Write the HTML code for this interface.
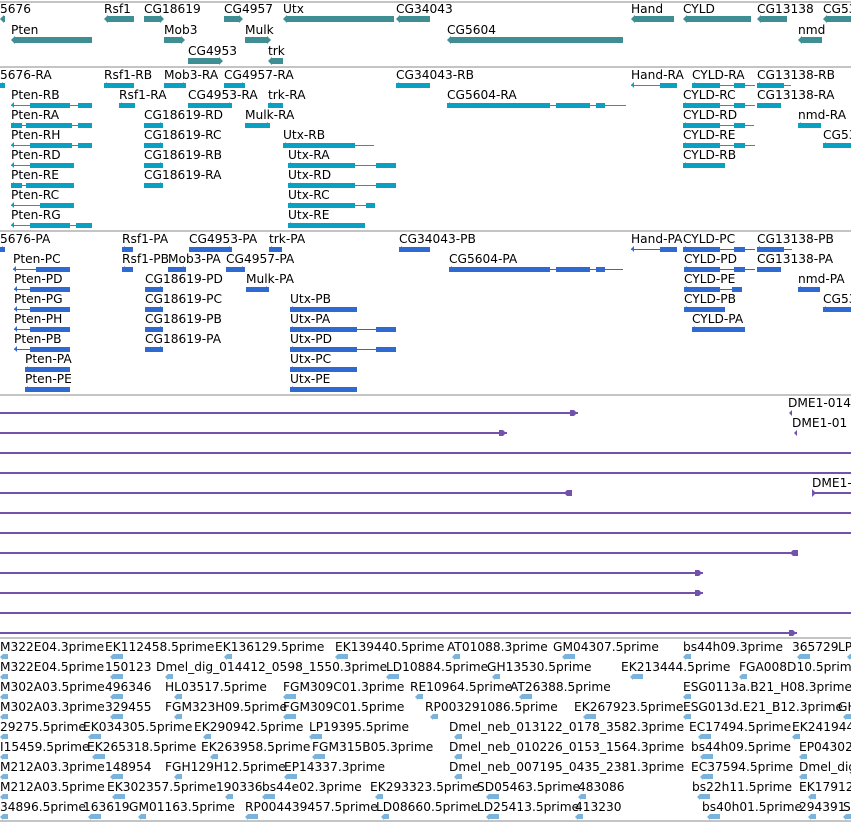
<!DOCTYPE html>
<html><head><meta charset="utf-8">
<style>
html,body{margin:0;padding:0;background:#fff;}
#c{position:relative;width:851px;height:822px;overflow:hidden;background:#fff;font-family:"DejaVu Sans","Liberation Sans",sans-serif;font-size:12.2px;color:#000;}
.t{position:absolute;white-space:nowrap;line-height:14px;height:14px;}
.b{position:absolute;}
.h{position:absolute;left:0;width:851px;height:2px;background:#c4c4c4;}
</style></head><body><div id="c"></div>
<script>
var C=document.getElementById('c'),H='';
function T(x,cy,s){H+='<div class="t" style="left:'+x+'px;top:'+(cy-7)+'px">'+s+'</div>';}
function R(x,y,w,h,c){H+='<div class="b" style="left:'+x+'px;top:'+y+'px;width:'+w+'px;height:'+h+'px;background:'+c+'"></div>';}
function tri(x,cy,h,c,dir){var s=h/2+1;if(dir<0)H+='<div class="b" style="left:'+(x-s)+'px;top:'+(cy-s)+'px;width:0;height:0;border-top:'+s+'px solid transparent;border-bottom:'+s+'px solid transparent;border-right:'+s+'px solid '+c+'"></div>';else H+='<div class="b" style="left:'+x+'px;top:'+(cy-s)+'px;width:0;height:0;border-top:'+s+'px solid transparent;border-bottom:'+s+'px solid transparent;border-left:'+s+'px solid '+c+'"></div>';}
function G(row,x,s,x1,x2,d){var lc=[8.5,30,51][row],bc=[18.5,40,61][row],c='#3f8e93';T(x,lc,s);var h=6;if(d<0){R(x1+4,bc-3,x2-x1-4,h,c);tri(x1+4,bc,h,c,-1);}else{R(x1,bc-3,x2-x1-4,h,c);tri(x2-4,bc,h,c,1);}}
function X(lc,x,s,x1,x2,c,blocks,d){T(x,lc,s);var bc=lc+10;R(x1,bc-0.5,x2-x1,1,c);
 if(!blocks)blocks=[[x1,x2]];blocks.forEach(function(b){R(b[0],bc-2.5,b[1]-b[0],5,c);});
 if(d<0)tri(x1+3,bc,5,c,-1);else if(d>0)tri(x2-3,bc,5,c,1);}
[1,66,230,394,637,820].forEach(function(y){H+='<div class="h" style="top:'+y+'px"></div>';});
G(0,0,'5676',0,5,-1);G(0,104,'Rsf1',104,134,-1);G(0,144,'CG18619',144,164,1);G(0,224,'CG4957',224,243,1);G(0,283,'Utx',283,394,-1);G(0,396,'CG34043',396,430,-1);G(0,631,'Hand',631,674,-1);G(0,683,'CYLD',683,751,-1);G(0,757,'CG13138',757,787,-1);G(0,823,'CG53',823,851,-1);
G(1,11,'Pten',11,92,-1);G(1,164,'Mob3',164,185,1);G(1,245,'Mulk',245,271,1);G(1,447,'CG5604',447,623,-1);G(1,798,'nmd',798,822,-1);
G(2,188,'CG4953',188,223,1);G(2,268,'trk',268,283,-1);
var c2='#0aa0c2',c3='#2f6ad2';
function sec(base,c,rows){rows.forEach(function(r,i){r.forEach(function(f){X(base+20*i,f[0],f[1],f[2],f[3],c,f[4],f[5]);});});}
sec(75,c2,[
 [[0,'5676-RA',0,5,0,-1],[104,'Rsf1-RB',104,134,0,-1],[164,'Mob3-RA',164,186,0,1],[224,'CG4957-RA',224,245,0,1],[396,'CG34043-RB',396,430,[[396,430]],-1],[631,'Hand-RA',631,677,[[660,677]],-1],[692,'CYLD-RA',692,755,[[692,720],[734,745]],-1],[757,'CG13138-RB',757,791,[[757,784]],-1]],
 [[11,'Pten-RB',11,92,[[30,70],[78,92]],-1],[119,'Rsf1-RA',119,135,0,-1],[188,'CG4953-RA',188,232,0,1],[268,'trk-RA',268,283,0,-1],[447,'CG5604-RA',447,626,[[447,550],[556,590],[596,605]],-1],[683,'CYLD-RC',683,755,[[683,720],[734,745]],-1],[757,'CG13138-RA',757,781,0,0]],
 [[11,'Pten-RA',11,92,[[11,22],[26,72],[78,92]],-1],[144,'CG18619-RD',144,163,0,1],[245,'Mulk-RA',245,270,0,1],[683,'CYLD-RD',683,754,[[683,720],[734,745]],-1],[798,'nmd-RA',798,821,0,-1]],
 [[11,'Pten-RH',11,92,[[30,72],[78,92]],-1],[144,'CG18619-RC',144,163,0,1],[283,'Utx-RB',283,374,[[283,355]],-1],[683,'CYLD-RE',683,755,[[683,720],[734,745]],-1],[823,'CG53',823,851,0,-1]],
 [[11,'Pten-RD',11,74,[[30,74]],-1],[144,'CG18619-RB',144,163,0,1],[288,'Utx-RA',288,396,[[288,355],[376,396]],-1],[683,'CYLD-RB',683,725,0,-1]],
 [[11,'Pten-RE',11,74,[[11,22],[26,74]],-1],[144,'CG18619-RA',144,163,0,1],[288,'Utx-RD',288,396,[[288,355],[376,396]],-1]],
 [[11,'Pten-RC',11,74,[[40,74]],-1],[288,'Utx-RC',288,375,[[288,355],[366,375]],-1]],
 [[11,'Pten-RG',11,92,[[30,70],[76,92]],-1],[288,'Utx-RE',288,365,0,-1]]
]);
sec(239,c3,[
 [[0,'5676-PA',0,5,0,-1],[122,'Rsf1-PA',122,133,0,-1],[189,'CG4953-PA',189,232,0,1],[269,'trk-PA',269,282,0,-1],[399,'CG34043-PB',399,430,0,-1],[631,'Hand-PA',631,677,[[660,677]],-1],[683,'CYLD-PC',683,755,[[683,720],[734,745]],-1],[757,'CG13138-PB',757,792,[[757,784]],-1]],
 [[13,'Pten-PC',13,70,[[36,70]],-1],[122,'Rsf1-PB',122,133,0,-1],[168,'Mob3-PA',168,186,0,1],[226,'CG4957-PA',226,245,0,1],[449,'CG5604-PA',449,623,[[449,550],[556,590],[596,605]],-1],[684,'CYLD-PD',684,755,[[684,720],[734,745]],-1],[757,'CG13138-PA',757,781,0,0]],
 [[14,'Pten-PD',14,70,[[30,70]],-1],[145,'CG18619-PD',145,163,0,1],[246,'Mulk-PA',246,269,0,1],[684,'CYLD-PE',684,742,[[684,720],[732,742]],-1],[798,'nmd-PA',798,820,0,-1]],
 [[14,'Pten-PG',14,70,[[30,70]],-1],[145,'CG18619-PC',145,163,0,1],[290,'Utx-PB',290,357,0,-1],[684,'CYLD-PB',684,725,0,-1],[823,'CG53',823,851,0,-1]],
 [[14,'Pten-PH',14,70,[[30,70]],-1],[145,'CG18619-PB',145,163,0,1],[290,'Utx-PA',290,396,[[290,357],[376,396]],-1],[692,'CYLD-PA',692,745,0,-1]],
 [[14,'Pten-PB',14,70,[[30,70]],-1],[145,'CG18619-PA',145,163,0,1],[290,'Utx-PD',290,396,[[290,357],[376,396]],-1]],
 [[25,'Pten-PA',25,70,0,-1],[290,'Utx-PC',290,357,0,-1]],
 [[25,'Pten-PE',25,70,0,-1],[290,'Utx-PE',290,357,0,-1]]
]);
var pc='#7352ae';
[[413,0,578,1],[433,0,507,1],[453,0,851,0],[473,0,851,0],[493,0,572,-1],[513,0,851,0],[533,0,851,0],[553,0,798,-1],[573,0,703,1],[593,0,703,1],[613,0,851,0],[633,0,797,1]].forEach(function(l){
 R(l[1],l[0]-1,l[2]-l[1],2,pc);
 if(l[3]>0){R(l[2]-8,l[0]-3,4,6,pc);tri(l[2]-4,l[0],5,pc,1);}
 if(l[3]<0){R(l[2]-5,l[0]-3,5,6,pc);tri(l[2]-5,l[0],5,pc,-1);}
});
T(788,403,'DME1-014');tri(792,413,5,pc,-1);
T(792,423,'DME1-01');tri(797,433,5,pc,-1);
T(812,483,'DME1-');R(812,492,39,2,pc);tri(812,493,6,pc,1);
var rows=[
[[0,'M322E04.3prime'],[105,'EK112458.5prime'],[215,'EK136129.5prime'],[335,'EK139440.5prime'],[447,'AT01088.3prime'],[553,'GM04307.5prime'],[683,'bs44h09.3prime'],[792,'365729'],[838,'LP']],
[[0,'M322E04.5prime'],[105,'150123'],[156,'Dmel_dig_014412_0598_1550.3prime'],[386,'LD10884.5prime'],[487,'GH13530.5prime'],[621,'EK213444.5prime'],[739,'FGA008D10.5prime']],
[[0,'M302A03.5prime'],[105,'496346'],[165,'HL03517.5prime'],[283,'FGM309C01.3prime'],[410,'RE10964.5prime'],[510,'AT26388.5prime'],[683,'ESG0113a.B21_H08.3prime']],
[[0,'M302A03.3prime'],[105,'329455'],[165,'FGM323H09.5prime'],[283,'FGM309C01.5prime'],[425,'RP003291086.5prime'],[574,'EK267923.5prime'],[683,'ESG013d.E21_B12.3prime'],[838,'GH']],
[[0,'29275.5prime'],[83,'EK034305.5prime'],[194,'EK290942.5prime'],[309,'LP19395.5prime'],[449,'Dmel_neb_013122_0178_3582.3prime'],[689,'EC17494.5prime'],[792,'EK241944']],
[[0,'I15459.5prime'],[87,'EK265318.5prime'],[201,'EK263958.5prime'],[312,'FGM315B05.3prime'],[449,'Dmel_neb_010226_0153_1564.3prime'],[691,'bs44h09.5prime'],[799,'EP04302']],
[[0,'M212A03.3prime'],[105,'148954'],[165,'FGH129H12.5prime'],[284,'EP14337.3prime'],[449,'Dmel_neb_007195_0435_2381.3prime'],[691,'EC37594.5prime'],[799,'Dmel_dig']],
[[0,'M212A03.5prime'],[107,'EK302357.5prime'],[216,'190336'],[262,'bs44e02.3prime'],[370,'EK293323.5prime'],[477,'SD05463.5prime'],[578,'483086'],[692,'bs22h11.5prime'],[799,'EK17912']],
[[0,'34896.5prime'],[83,'163619'],[129,'GM01163.5prime'],[245,'RP004439457.5prime'],[376,'LD08660.5prime'],[477,'LD25413.5prime'],[575,'413230'],[702,'bs40h01.5prime'],[799,'294391'],[843,'S']]];
var lb='#7ab4dc';
rows.forEach(function(r,i){var lc=647+20*i;r.forEach(function(f,j){T(f[0],lc,f[1]);var ax=f[0]+(j%3==0?3:(j%3==1?8:12));R(ax,lc+7,(j%2?10:5),5,lb);tri(ax,lc+9.5,4,lb,-1);});});
C.innerHTML=H;
</script></body></html>
